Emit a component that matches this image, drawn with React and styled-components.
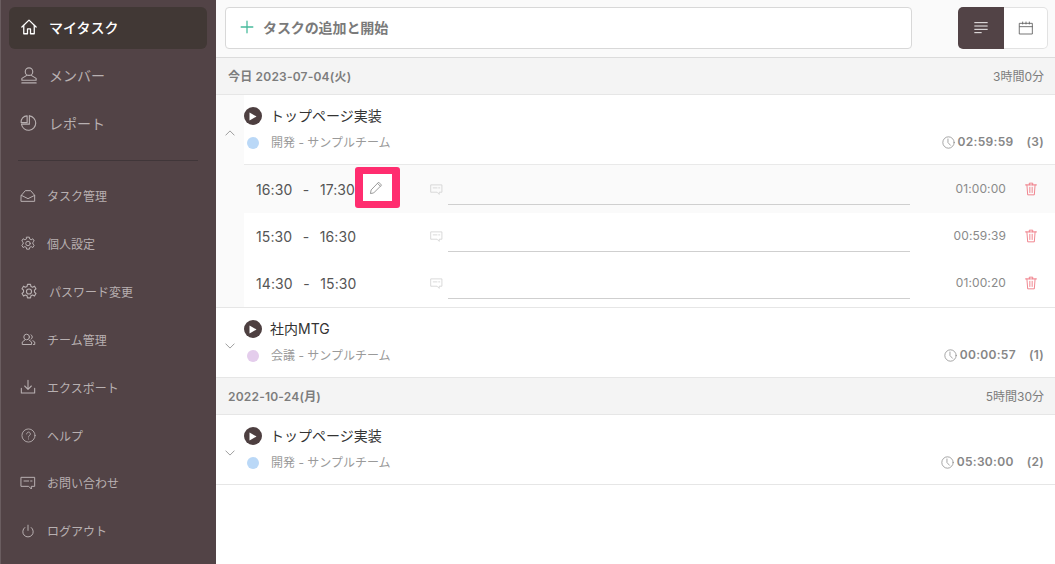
import React from "react";
import styled, { createGlobalStyle } from "styled-components";

const Global = createGlobalStyle`
  html, body { margin: 0; padding: 0; height: 100%; background: #fff; }
  body { font-family: Inter, "Noto Sans CJK JP", sans-serif; overflow: hidden; }
  * { box-sizing: border-box; }
`;

const Page = styled.div`display: flex; width: 1055px; height: 564px; overflow: hidden;`;

const Sidebar = styled.nav`
  width: 216px; flex: none; height: 564px; background: #524346;
  border-left: 1px solid #6a5d60; padding-top: 3px;
`;
const NavItem = styled.div`
  display: flex; align-items: center; height: ${p => p.$h}px; padding-left: 19px; gap: ${p => p.$gap}px;
  color: ${p => (p.$active ? "#fff" : "#b8b0b1")};
  font-size: ${p => p.$size}px; font-weight: ${p => (p.$active ? 500 : 400)};
  position: relative; z-index: 0;
  ${p => p.$active && `&::before { content: ""; position: absolute; z-index: -1; left: 8px; right: 9px; top: 4px; bottom: 2px; background: #413835; border-radius: 6px; }`}
`;
const IconBox = styled.span`
  width: ${p => p.$w}px; flex: none; display: flex; align-items: center; justify-content: center;
`;
const Divider = styled.hr`
  margin: 13px 18px 11px 17px; border: none; border-top: 1px solid #403639; height: 1px;
`;

const Main = styled.main`flex: 1; min-width: 0; position: relative;`;
const TopBar = styled.header`
  height: 58px; background: #fafafa; border-bottom: 1px solid #dcdcdc;
  display: flex; align-items: flex-start; padding: 7px 7px 0 9px; justify-content: space-between;
`;
const AddBox = styled.div`
  width: 687px; height: 42px; background: #fff; border: 1px solid #d8d8d8; border-radius: 4px;
  display: flex; align-items: center; padding: 0 0 2px 14px; gap: 9px;
  font-size: 14px; font-weight: 600; color: #7a7a7a; letter-spacing: -0.1px;
`;
const Toggle = styled.div`width: 90px; height: 42px; display: flex;`;
const ToggleBtn = styled.div`
  flex: 1; display: flex; align-items: center; justify-content: center;
  background: ${p => (p.$active ? "#524346" : "#fff")};
  border-radius: ${p => (p.$active ? "5px 0 0 5px" : "0 5px 5px 0")};
  border: ${p => (p.$active ? "none" : "1px solid #e2e2e2")};
  ${p => !p.$active && "border-left: none;"}
  ${p => p.$active && "flex: none; width: 46px;"}
`;

const DateRow = styled.div`
  height: 37px; background: #f4f4f4; border-bottom: 1px solid #e6e6e6;
  display: flex; align-items: center; justify-content: space-between; padding: 0 11px 2px 12px;
  font-size: 12px; color: #7d7d7d;
`;
const DateLabel = styled.span`font-weight: 600; letter-spacing: 0.2px;`;

const Task = styled.section`
  display: flex; border-bottom: 1px solid #e6e6e6; background: ${p => (p.$open ? "#fafafa" : "#fff")};
`;
const ChevronCol = styled.div`
  width: 28px; flex: none; height: 69px; display: flex; align-items: center; justify-content: center; padding: 6px 0 0 0;
`;
const TaskBody = styled.div`flex: 1; min-width: 0; background: #fff;`;
const TaskHead = styled.div`
  height: ${p => (p.$open ? 70 : 69)}px; padding: 12px 11px 0 0;
  ${p => p.$open && "border-bottom: 1px solid #e9e9e9;"}
`;
const TitleLine = styled.div`
  display: flex; align-items: center; gap: 8px; height: 18px; font-size: 14px; color: #333; font-weight: 400;
`;
const TitleText = styled.span`margin-top: -2px;`;
const PlayDisc = styled.span`
  width: 18px; height: 18px; border-radius: 50%; background: #4d3f40; flex: none;
  display: flex; align-items: center; justify-content: center;
`;
const SubLine = styled.div`
  display: flex; align-items: center; height: 18px; margin-top: 7px; font-size: 12px; color: #9a9a9a; padding-left: 3px;
`;
const Dot = styled.span`
  width: 12px; height: 12px; border-radius: 50%; background: ${p => p.$color}; flex: none; margin: 3px 12px 0 0;
`;
const Total = styled.div`
  margin-left: auto; display: flex; align-items: center; color: #868686; font-weight: 600; font-size: 12px; letter-spacing: 0.3px;
`;
const Count = styled.span`margin-left: 13px;`;
const ClockWrap = styled.span`display: flex; margin-right: 3px; margin-top: 3px;`;

const Entry = styled.div`
  height: ${p => (p.$hl ? 48 : 47)}px; display: flex; align-items: center;
  background: ${p => (p.$hl ? "#fafafa" : "#fff")};
  padding: 0 17px ${p => (p.$hl ? 0 : 1)}px 0;
`;
const Times = styled.div`
  width: 186px; flex: none; padding-left: 12px; font-size: 14px; color: #555; white-space: pre;
  letter-spacing: 0.1px; word-spacing: 1.2px;
`;
const Comment = styled.div`flex: none; display: flex; width: 18px; margin-top: 1px;`;
const NoteLine = styled.div`
  width: 462px; flex: none; align-self: flex-start; height: ${p => (p.$hl ? 40 : 39)}px; border-bottom: 1px solid #cfcfcf;
`;
const Duration = styled.div`
  margin-left: auto; margin-top: -1px; font-size: 12px; color: #8a8a8a; letter-spacing: 0.1px;
`;
const Trash = styled.span`display: flex; margin-left: 18px;`;

const Highlight = styled.div`
  position: absolute; left: 139px; top: 167px; width: 45px; height: 41px;
  border: 8px solid #ff2d6f; border-width: 7px 8px; border-radius: 3px; background: #fff;
  display: flex; align-items: center; justify-content: center; padding-right: 4px;
`;

const Ico = ({ size = 16, vb = 24, color = "currentColor", sw = 1.5, children }) => (
  <svg width={size} height={size} viewBox={`0 0 ${vb} ${vb}`} fill="none" stroke={color} strokeWidth={sw} strokeLinecap="round" strokeLinejoin="round">{children}</svg>
);

const Home = () => <Ico size={18} sw={1.7}><path d="M2.5 12 12 2.8 21.5 12" /><path d="M5 10v11h5v-6.5h4V21h5V10" /></Ico>;
const User = () => <Ico size={18} sw={1.5}><circle cx="12" cy="7.5" r="5" /><path d="M9 12.5 2.5 16.5V19h19v-2.5L15 12.5" /><path d="M2.5 22.5h19" /></Ico>;
const Pie = () => <Ico size={18} sw={1.5}><path d="M9.5 2.5v9h-8a8 8 0 0 1 8-9z" /><path d="M12.5 2.5a9.6 9.6 0 1 1-10.5 11.5" /><path d="M12.5 2.5v11H2" /></Ico>;
const Inbox = () => <Ico size={16} sw={1.5}><path d="M2 11 8 4h8l6 7v9H2z" /><path d="M2 11l10 5 10-5" /></Ico>;
const Gear = ({ size }) => (
  <Ico size={size} sw={1.5}>
    <circle cx="12" cy="12" r="3.4" />
    <path d="M10 2.5h4l.6 2.8 2.2 1 2.5-1.4 2 3.4-2 1.9v2.6l2 1.9-2 3.4-2.5-1.4-2.2 1-.6 2.8h-4l-.6-2.8-2.2-1-2.5 1.4-2-3.4 2-1.9v-2.6l-2-1.9 2-3.4 2.5 1.4 2.2-1z" />
  </Ico>
);
const Team = () => <Ico size={15} sw={1.6}><circle cx="9" cy="8" r="4.5" /><path d="M6 13l-4 3v4h15v-4l-4-3" /><path d="M16 4.5a4 4 0 0 1 0 7M19 14l3 2v4h-2" /></Ico>;
const Download = () => <Ico size={16} sw={1.6}><path d="M12 2v13M7 10.5l5 5 5-5" /><path d="M2 14v7h20v-7" /></Ico>;
const Help = () => <Ico size={15} sw={1.4}><circle cx="12" cy="12" r="10.5" /><path d="M9 9.5a3 3 0 1 1 4.6 2.5c-1 .6-1.6 1.2-1.6 2.5" /><path d="M12 17.5v.2" /></Ico>;
const Chat = ({ size = 16, color = "currentColor" }) => <Ico size={size} color={color} sw={1.5}><path d="M2 3.5h20V17h-5v4l-4-4H2z" /><path d="M6 9h7M16 9h2" /></Ico>;
const Power = () => <Ico size={14} sw={1.7}><path d="M12 2v9" /><path d="M6.5 6a9 9 0 1 0 11 0" /></Ico>;
const Plus = () => <Ico size={14} color="#48bb9c" sw={2.2}><path d="M12 2v20M2 12h20" /></Ico>;
const ListIc = () => <Ico size={16} color="#fff" sw={1.4}><path d="M2 4h20M2 9h20M2 14h20M2 19h11" strokeLinecap="butt" /></Ico>;
const Cal = () => <Ico size={16} color="#5f5f5f" sw={1.3}><path d="M2.5 5h19v16h-19zM2.5 10h19M7 3v3M12 3v3M17 3v3" /></Ico>;
const Chevron = ({ up }) => <Ico size={10} color="#777" sw={1.7}><path d={up ? "M2 17l10-10 10 10" : "M2 7l10 10 10-10"} /></Ico>;
const Play = () => <svg width="8" height="9" viewBox="0 0 8 9"><path d="M0.5 0.5 7.5 4.5 0.5 8.5z" fill="#fff" /></svg>;
const Clock = () => <Ico size={13} color="#8a8a8a" sw={1.4}><circle cx="12" cy="12" r="10.5" /><path d="M11 5.5V12l4.5 5" /></Ico>;
const TrashIc = () => <Ico size={14} color="#ee6c78" sw={1.4}><path d="M2.5 5h19M9 5V2h6v3M5 5l1.3 17h11.4L19 5M10 9v9M14 9v9" /></Ico>;
const Pencil = () => <Ico size={14} color="#858585" sw={1.4}><path d="M17 2.5 21.5 7 8 20.5 2.5 21.5 3.5 16z" /><path d="M15 4.5 19.5 9" /></Ico>;

const topNav = [
  { label: "マイタスク", icon: <Home />, active: true },
  { label: "メンバー", icon: <User /> },
  { label: "レポート", icon: <Pie /> },
];
const lowerNav = [
  { label: "タスク管理", icon: <Inbox /> },
  { label: "個人設定", icon: <Gear size={17} /> },
  { label: "パスワード変更", icon: <Gear size={19} />, w: 18 },
  { label: "チーム管理", icon: <Team /> },
  { label: "エクスポート", icon: <Download /> },
  { label: "ヘルプ", icon: <Help /> },
  { label: "お問い合わせ", icon: <Chat /> },
  { label: "ログアウト", icon: <Power /> },
];

const TaskHeader = ({ title, sub, color, total, count, open }) => (
  <TaskHead $open={open}>
    <TitleLine><PlayDisc><Play /></PlayDisc><TitleText>{title}</TitleText></TitleLine>
    <SubLine>
      <Dot $color={color} />{sub}
      <Total><ClockWrap><Clock /></ClockWrap>{total}<Count>({count})</Count></Total>
    </SubLine>
  </TaskHead>
);

const EntryRow = ({ from, to, dur, hl }) => (
  <Entry $hl={hl}>
    <Times>{`${from}  -  ${to}`}</Times>
    <Comment><Chat size={13} color="#d2d2d2" /></Comment>
    <NoteLine $hl={hl} />
    <Duration>{dur}</Duration>
    <Trash><TrashIc /></Trash>
  </Entry>
);

export default function App() {
  return (
    <Page>
      <Global />
      <Sidebar>
        {topNav.map(n => (
          <NavItem key={n.label} $active={n.active} $gap={11} $size={14} $h={48}><IconBox $w={18}>{n.icon}</IconBox>{n.label}</NavItem>
        ))}
        <Divider />
        {lowerNav.map(n => (
          <NavItem key={n.label} $gap={11} $size={12} $h={47.85}><IconBox $w={n.w || 16}>{n.icon}</IconBox>{n.label}</NavItem>
        ))}
      </Sidebar>
      <Main>
        <TopBar>
          <AddBox><Plus />タスクの追加と開始</AddBox>
          <Toggle>
            <ToggleBtn $active><ListIc /></ToggleBtn>
            <ToggleBtn><Cal /></ToggleBtn>
          </Toggle>
        </TopBar>
        <DateRow><DateLabel>今日 2023-07-04(火)</DateLabel><span>3時間0分</span></DateRow>
        <Task $open>
          <ChevronCol><Chevron up /></ChevronCol>
          <TaskBody>
            <TaskHeader open title="トップページ実装" sub="開発 - サンプルチーム" color="#bad8f7" total="02:59:59" count={3} />
            <EntryRow hl from="16:30" to="17:30" dur="01:00:00" />
            <EntryRow from="15:30" to="16:30" dur="00:59:39" />
            <EntryRow from="14:30" to="15:30" dur="01:00:20" />
          </TaskBody>
        </Task>
        <Task>
          <ChevronCol><Chevron /></ChevronCol>
          <TaskBody>
            <TaskHeader title="社内MTG" sub="会議 - サンプルチーム" color="#e4cdec" total="00:00:57" count={1} />
          </TaskBody>
        </Task>
        <DateRow><DateLabel>2022-10-24(月)</DateLabel><span>5時間30分</span></DateRow>
        <Task>
          <ChevronCol><Chevron /></ChevronCol>
          <TaskBody>
            <TaskHeader title="トップページ実装" sub="開発 - サンプルチーム" color="#bad8f7" total="05:30:00" count={2} />
          </TaskBody>
        </Task>
        <Highlight><Pencil /></Highlight>
      </Main>
    </Page>
  );
}
